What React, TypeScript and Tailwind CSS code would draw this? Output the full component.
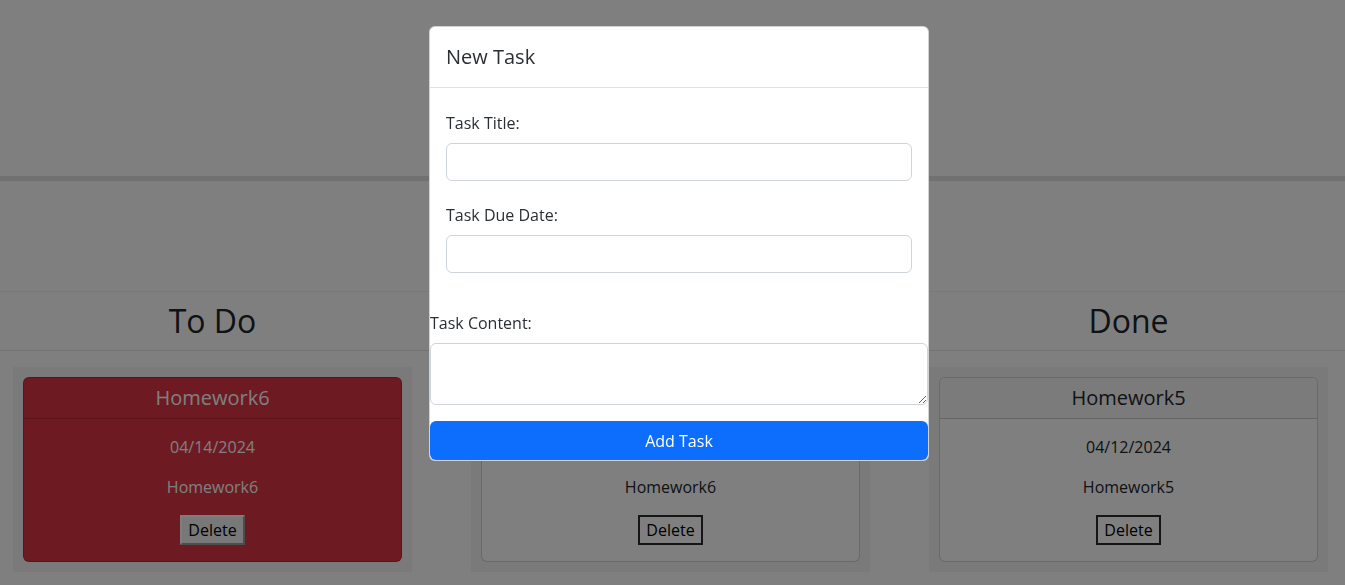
import React from 'react';

type Task = {
  title: string;
  date: string;
  content: string;
  overdue?: boolean;
};

const lanes: { name: string; tasks: Task[] }[] = [
  { name: 'To Do', tasks: [{ title: 'Homework6', date: '04/14/2024', content: 'Homework6', overdue: true }] },
  { name: 'In Progress', tasks: [{ title: 'Homework6', date: '04/13/2024', content: 'Homework6' }] },
  { name: 'Done', tasks: [{ title: 'Homework5', date: '04/12/2024', content: 'Homework5' }] },
];

const TaskCard: React.FC<{ task: Task }> = ({ task }) => {
  if (task.overdue) {
    return (
      <div className="bg-[#dc3545] text-white border border-[rgba(0,0,0,0.175)] rounded-md text-center">
        <div className="h-[41px] flex items-center justify-center border-b border-[rgba(0,0,0,0.175)] text-[20px]">
          {task.title}
        </div>
        <div className="p-4">
          <p className="leading-6 mb-4">{task.date}</p>
          <p className="leading-6 mb-4">{task.content}</p>
          <button className="h-[30px] px-[6px] leading-6 text-black bg-[#f0f0f0] border-2 border-t-[#fdfdfd] border-l-[#fdfdfd] border-b-[#9a9a9a] border-r-[#9a9a9a]">
            Delete
          </button>
        </div>
      </div>
    );
  }
  return (
    <div className="bg-white text-[#212529] border border-[rgba(0,0,0,0.175)] rounded-md text-center overflow-hidden">
      <div className="h-[41px] flex items-center justify-center bg-[#f7f7f7] border-b border-[rgba(0,0,0,0.175)] text-[20px]">
        {task.title}
      </div>
      <div className="p-4">
        <p className="leading-6 mb-4">{task.date}</p>
        <p className="leading-6 mb-4">{task.content}</p>
        <button className="h-[30px] px-[6px] leading-6 text-black bg-white border-2 border-[#2a2a2a]">
          Delete
        </button>
      </div>
    </div>
  );
};

const App: React.FC = () => {
  return (
    <div className="relative min-h-[585px] bg-white text-[#212529] font-['Open_Sans',sans-serif] text-base">
      {/* page */}
      <div className="h-[176px]"></div>
      <div className="h-[5px] bg-[#e2e2e2]"></div>
      <div className="h-[110px]"></div>

      <div className="h-[60px] border-t border-[#f2f2f2] border-b border-b-[#e4e4e4] grid grid-cols-3 gap-[59px] pl-[13px] pr-[17px]">
        {lanes.map((lane) => (
          <div key={lane.name} className="flex items-center justify-center text-[32px] leading-none pb-[1px]">
            {lane.name}
          </div>
        ))}
      </div>

      <div className="grid grid-cols-3 gap-[59px] pl-[13px] pr-[17px] pt-4">
        {lanes.map((lane) => (
          <div key={lane.name} className="bg-[#f5f5f5] p-[10px]">
            {lane.tasks.map((task, i) => (
              <TaskCard key={i} task={task} />
            ))}
          </div>
        ))}
      </div>

      {/* backdrop */}
      <div className="fixed inset-0 bg-black/50"></div>

      {/* modal */}
      <div className="fixed left-[429px] top-[26px] w-[500px] bg-white border border-[rgba(0,0,0,0.175)] rounded-md">
        <div className="h-[61px] px-4 flex items-center border-b border-[#dee2e6] text-[20px] text-[#2b2f33]">
          New Task
        </div>
        <div className="px-4 pt-[23px] pb-[38px] text-[#2b2f33]">
          <label className="block leading-6 mb-2">Task Title:</label>
          <input type="text" className="block w-full h-[38px] border border-[#ced4da] rounded-md bg-white" />
          <label className="block leading-6 mb-2 mt-[22px]">Task Due Date:</label>
          <input type="text" className="block w-full h-[38px] border border-[#ced4da] rounded-md bg-white" />
        </div>
        <label className="block leading-6 mb-2 text-[#2b2f33]">Task Content:</label>
        <textarea className="block w-full h-[62px] border border-[#ced4da] rounded-md bg-white"></textarea>
        <button className="mt-4 w-full h-[39px] bg-[#0d6efd] text-white rounded-md">Add Task</button>
      </div>
    </div>
  );
};

export default App;
